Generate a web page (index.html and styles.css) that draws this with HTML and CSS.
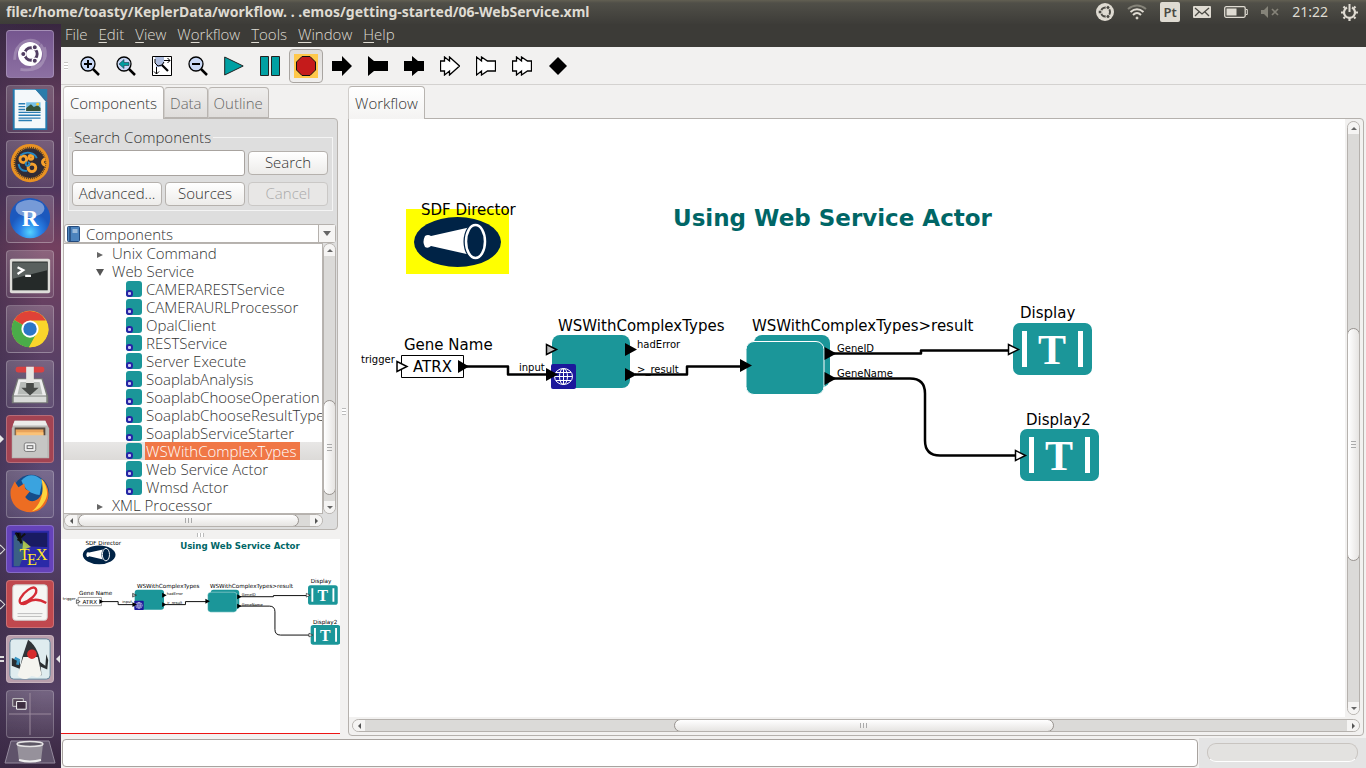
FILE: index.html
```html
<!DOCTYPE html>
<html lang="en">
<head>
<meta charset="utf-8">
<title>Kepler workflow</title>
<link rel="stylesheet" href="styles.css">
</head>
<body>
<header class="topbar">
  <h1 class="window-title">file:/home/toasty/KeplerData/workflow. . .emos/getting-started/06-WebService.xml</h1>
  <div class="indicators">
    <svg width="18" height="18" viewBox="0 0 18 18"><circle cx="9" cy="9" r="9" fill="#dfdbd2"/><circle cx="9.500" cy="9" r="4.500" fill="none" stroke="#4a4943" stroke-width="2"/><g fill="#4a4943" stroke="#dfdbd2"><circle cx="4" cy="9" r="2"/><circle cx="12" cy="4.500" r="2"/><circle cx="12" cy="13.500" r="2"/></g></svg>
    <svg width="20" height="16" viewBox="0 0 20 16" fill="none" stroke="#dfdbd2" stroke-width="2"><path d="M1 5Q10-2 19 5" stroke="#858379"/><path d="M3.500 8Q10 2.500 16.500 8M6 11Q10 7 14 11"/><circle cx="10" cy="14" r="1" fill="#dfdbd2" stroke-width="1"/></svg>
    <span class="layout-badge">Pt</span>
    <svg width="18" height="12" viewBox="0 0 18 12"><rect width="18" height="12" rx="1" fill="#dfdbd2"/><path d="M2 2L9 8L16 2M2 10L6 6M16 10L12 6" fill="none" stroke="#4a4943" stroke-width="1.300"/></svg>
    <svg width="24" height="12" viewBox="0 0 24 12"><rect x=".7" y=".7" width="20.500" height="10.600" rx="1.500" fill="none" stroke="#dfdbd2" stroke-width="1.300"/><rect x="2.500" y="2.500" width="10" height="7" fill="#dfdbd2"/><path d="M22 3.500h1.300v5H22" fill="none" stroke="#dfdbd2"/></svg>
    <svg width="18" height="12" viewBox="0 0 18 12"><path d="M0 4h3l4-4v12L3 8H0z" fill="#858379"/><path d="M11 3l6 6M17 3l-6 6" stroke="#858379" stroke-width="1.700"/></svg>
    <time class="clock">21:22</time>
    <svg width="17" height="17" viewBox="0 0 17 17" fill="none" stroke="#dfdbd2"><path d="M6 3.500A5.500 5.500 0 1 0 11 3.500" stroke-width="2.200"/><path d="M8.500 0v8" stroke-width="2"/><path d="M2.500 2.500l1.500 1.500M14.500 2.500l-1.500 1.500M0 8.500h3M14 8.500h3M2.500 14.500l1.500-1.500M14.500 14.500l-1.500-1.500M8.500 14v3" stroke-width="2.200"/></svg>
  </div>
</header>

<div class="desktop">
  <nav class="launcher" aria-label="Launcher">
    <button class="tile tile-dash" aria-label="Dash"><svg viewBox="0 0 48 48"><g fill="none" stroke="#fff"><path d="M8 30C8 10 27 5 34 14M14 40C40 44 43 25 35 14M39 17C43 30 35 38 25 37" stroke-width="3" opacity=".22"/></g><circle cx="24" cy="24" r="12.500" fill="#fff"/><circle cx="25" cy="24" r="6.500" fill="none" stroke="#503d61" stroke-width="3"/><g fill="#503d61" stroke="#fff" stroke-width="1.200"><circle cx="17" cy="24" r="2.700"/><circle cx="29" cy="17" r="2.700"/><circle cx="29" cy="31" r="2.700"/></g></svg></button>
    <button class="tile" aria-label="Writer"><svg viewBox="0 0 48 48"><path d="M6 3h24l12 14v29H6z" fill="#2379ae"/><path d="M8 4h22l10 12v28H8z" fill="#f4f8fa"/><path d="M29 3h13v13z" fill="#2a7cab"/><path d="M12 18.500h7M12 21.500h7M12 24.500h7M12 27.500h23M12 30.500h23M12 33.500h23M12 36h14" stroke="#2a7eb4" stroke-width="1.500"/><path d="M20 17h15v9H20z" fill="#76c0e6"/><path d="M20 26v-3l5-4 3 3 4-2 3 3v3z" fill="#34533b"/><circle cx="32" cy="19" r="1.500" fill="#fc3"/></svg></button>
    <button class="tile" aria-label="Gears"><svg viewBox="0 0 48 48"><circle cx="24" cy="23" r="20" fill="#e89122"/><circle cx="24" cy="23" r="15.500" fill="#302b35"/><circle cx="24" cy="23" r="16" fill="none" stroke="#4c3a28" stroke-width="2" stroke-dasharray="1 1"/><g fill="none" stroke="#f7a12c" stroke-width="3"><circle cx="17" cy="19" r="3.500"/><circle cx="26" cy="28" r="4"/><circle cx="25" cy="17" r="2"/><path d="M40 19a3 3 0 1 0 0 6"/></g><path d="M14 15C20 10 29 12 31 18M12 24C13 29 16 32 21 31M21 22a2 2 0 1 0 1 0" fill="none" stroke="#2586c2" stroke-width="2"/></svg></button>
    <button class="tile" aria-label="RStudio"><svg viewBox="0 0 48 48"><defs><radialGradient id="blue" cy="85%"><stop offset="0" stop-color="#55d3ff"/><stop offset=".5" stop-color="#2a84ea"/><stop offset="1" stop-color="#1c58bd"/></radialGradient></defs><circle cx="24" cy="23" r="21" fill="url(#blue)"/><ellipse cx="24" cy="13" rx="15" ry="9" fill="#fff" opacity=".4"/><text class="r-letter" x="24" y="31">R</text></svg></button>
    <button class="tile" aria-label="Terminal"><svg viewBox="0 0 48 48"><rect x="3" y="8" width="42" height="36" rx="2" fill="#deddd9"/><rect x="5.500" y="11" width="37" height="30" fill="#252a29"/><path d="M6 12h36v8L6 29z" fill="#59605e"/><path d="M11 17l6 3-6 4M19 26h6" fill="none" stroke="#fff" stroke-width="2.300"/></svg></button>
    <button class="tile" aria-label="Chrome"><svg viewBox="0 0 48 48"><circle cx="24" cy="24" r="19" fill="#f9d52b"/><path d="M24 24L7.500 14.500A19 19 0 0 1 40.500 15z" fill="#df4237"/><path d="M24 24L7.500 14.500A19 19 0 0 0 23 43z" fill="#4aac49"/><path d="M24 24l7 4-8 15-7-14z" fill="#4aac49"/><path d="M24 15h17A19 19 0 0 1 23 43l9-15z" fill="#f9d52b"/><circle cx="24" cy="24" r="9" fill="#fff"/><circle cx="24" cy="24" r="7" fill="#2b76c7"/></svg></button>
    <button class="tile" aria-label="Downloads"><svg viewBox="0 0 48 48"><path d="M11 18h26l6 19v7H5v-7z" fill="#777a77"/><path d="M12 19h24l5 17H7z" fill="#eee"/><path d="M14 22h20l3 13H11z" fill="#b7bbb8"/><path d="M7 37h34v6H7z" fill="#d9dbd9"/><rect x="9" y="6" width="30" height="6" rx="2.500" fill="#d84242"/><path d="M20 6h8v18h-8z" fill="#e6e6e3"/><path d="M20 23h8v5h5l-9 8-9-8h5z" fill="#474a48"/></svg></button>
    <button class="tile tile-files tile-open" aria-label="Files"><svg viewBox="0 0 48 48"><path d="M8 5h32l4 8v31H5V13z" fill="#b9b9b6"/><path d="M8 5h32l2 5H6z" fill="#ececea"/><path d="M8 12h32v10H8z" fill="#57483d"/><path d="M9 14h29v8H9z" fill="#e9a35b"/><path d="M10 17h28v6H10z" fill="#fac278"/><path d="M6 20h36v23H6z" fill="#c6c6c4"/><rect x="18" y="28" width="12" height="9" rx="2" fill="#eee" stroke="#777"/><rect x="21" y="31" width="6" height="3" fill="none" stroke="#666"/></svg></button>
    <button class="tile" aria-label="Firefox"><svg viewBox="0 0 48 48"><circle cx="25" cy="23" r="19" fill="#164c89"/><path d="M15 10Q25-1 37 10L34 25Q20 24 15 10z" fill="#3aa3df"/><path d="M36 8C50 21 43 42 25 43 9 43 2 31 4 19l4-8 4 6 6-4c1 5 0 6 6 8l-5 6c5 7 12 5 16-1 5-6 2-12 1-18z" fill="#ed6d22"/><path d="M36 8c6 7 8 17 3 24-3 6-8 9-13 10 10-8 13-20 10-34z" fill="#ffd33d"/></svg></button>
    <button class="tile tile-tex tile-running" aria-label="TeX editor"><svg viewBox="0 0 48 48"><rect x="5" y="5" width="39" height="38" fill="#2b2aa8"/><path d="M8 7h34v15L17 21z" fill="#191b62"/><path d="M12 8l9 14-8 20H7V10z" fill="#4c9662" opacity=".5"/><path d="M17 15l8 7-9 3z" fill="#c8e04a" opacity=".8"/><path d="M9 7l6 11-2-11M11 15l8-7" stroke="#111" stroke-width="2"/><text class="tex-letter" x="13" y="36">T</text><text class="tex-letter" x="21" y="41">E</text><text class="tex-letter" x="30" y="36">X</text></svg></button>
    <button class="tile tile-pdf tile-running" aria-label="Document viewer"><svg viewBox="0 0 48 48"><rect x="6" y="4" width="36" height="37" rx="3" fill="#f6f6f4" stroke="#cfcccb"/><path d="M14 24C24 21 33 13 30 8 27 4 17 12 14 18 11 24 17 26 22 22 28 18 34 19 41 23" fill="none" stroke="#d52c36" stroke-width="2.500"/><path d="M11 34h26M11 37h25" stroke="#bbb" stroke-width="1"/></svg></button>
    <button class="tile tile-java tile-active" aria-label="Java application"><svg viewBox="0 0 48 48"><rect x="3" y="3" width="42" height="42" rx="4" fill="#dfecef" stroke="#608198"/><path d="M13 26l-8-3v8l10 4zM33 26l7 5 1-12 2 6-1 10-9-4z" fill="#292e31"/><path d="M22 4c9 7 12 16 13 26l1 11H12l4-19z" fill="#303438"/><path d="M17 22h15l4 18c-4 6-8 1-11 2-5 5-11 3-14-1z" fill="#f4f4ef"/><circle cx="26" cy="19" r="5" fill="#d72b2b"/><path d="M8 23l4 2-1 5" fill="none" stroke="#3996c4" stroke-width="3"/></svg></button>
    <div class="launcher-end">
      <button class="tile tile-spaces" aria-label="Workspaces"><svg viewBox="0 0 48 48"><path d="M24 2v44M2 24h44" stroke="#9c8c9e"/><path d="M6 8h11v8H6z" fill="#554657" stroke="#ccc"/><path d="M10 11h10v8H10z" fill="#3d2d40" stroke="#fff"/></svg></button>
      <button class="trash" aria-label="Trash"><svg width="52" height="24" viewBox="0 0 52 24"><path d="M7 1h38l6 22H1z" fill="#5f536a" stroke="#948a9d"/><path d="M13 4l2 17q11 3 22 0l2-17z" fill="#96919b"/><ellipse cx="26" cy="4" rx="13" ry="2.500" fill="#5e5866" stroke="#e7e5e6" stroke-width="1.500"/><path d="M15 20q11 3 22 0" fill="none" stroke="#eee" stroke-width="2"/></svg></button>
    </div>
  </nav>

  <div class="app">
    <nav class="menubar" aria-label="Menu">
      <button>File</button><button><u>E</u>dit</button><button><u>V</u>iew</button><button>W<u>o</u>rkflow</button><button><u>T</u>ools</button><button><u>W</u>indow</button><button><u>H</u>elp</button>
    </nav>

    <div class="toolbar" role="toolbar" aria-label="Workflow tools">
      <span class="grip"></span>
      <button aria-label="Zoom in"><svg width="20" height="20" viewBox="0 0 20 20"><path d="M13 13l6 6" stroke="#000" stroke-width="2.500"/><circle cx="8" cy="8" r="7" fill="#c9d8f6" stroke="#000" stroke-width="1.300"/><path d="M8 4v8M4 8h8" stroke="#000" stroke-width="2"/></svg></button>
      <button aria-label="Zoom reset"><svg width="20" height="20" viewBox="0 0 20 20"><path d="M13 13l6 6" stroke="#000" stroke-width="2.500"/><circle cx="8" cy="8" r="7" fill="#c9d8f6" stroke="#000" stroke-width="1.300"/><path d="M3 8l5-4.500v3h5v3H8v3z" fill="#009c9e" stroke="#234" stroke-width=".6"/></svg></button>
      <button aria-label="Zoom fit"><svg width="20" height="20" viewBox="0 0 20 20"><path d="M.5.5h19v19H.5z" fill="#fff" stroke="#000"/><path d="M3 1h9v6l-3 4H4z" fill="#aebddf"/><path d="M10 9l6 6" stroke="#000" stroke-width="2.200"/><path d="M3 3v4l3 3 4-1 2-3M12 4.500h6M15.500 2l2.500 2.500L15.500 7M4.500 11v7M2 15.500L4.500 18 7 15.500" fill="none" stroke="#000"/></svg></button>
      <button aria-label="Zoom out"><svg width="20" height="20" viewBox="0 0 20 20"><path d="M13 13l6 6" stroke="#000" stroke-width="2.500"/><circle cx="8" cy="8" r="7" fill="#c9d8f6" stroke="#000" stroke-width="1.300"/><path d="M4 8h8" stroke="#000" stroke-width="2"/></svg></button>
      <button aria-label="Run"><svg width="20" height="20" viewBox="0 0 20 20"><path d="M.7 1l18.500 9L.7 19z" fill="#00a0a3" stroke="#222"/></svg></button>
      <button aria-label="Pause"><svg width="20" height="20" viewBox="0 0 20 20"><path d="M.5.5h8v19h-8zM11.500.5h8v19h-8z" fill="#00a0a3" stroke="#222"/></svg></button>
      <button class="is-focused" aria-label="Stop"><svg width="24" height="24" viewBox="0 0 24 24"><path d="M0 0h24v24H0z" fill="#ffc84b"/><path d="M8 2.500h8L21.500 8v8L16 21.500H8L2.500 16V8z" fill="#c51b1b" stroke="#111"/></svg></button>
      <button aria-label="Input port"><svg width="20" height="20" viewBox="0 0 20 20"><path d="M0 5h10V0l10 10-10 10v-5H0z"/></svg></button>
      <button aria-label="Output port"><svg width="20" height="20" viewBox="0 0 20 20"><path d="M0 0l6 5h14v10H6l-6 5z"/></svg></button>
      <button aria-label="Input and output port"><svg width="20" height="20" viewBox="0 0 20 20"><path d="M0 5h8V0l6 5h6v10h-6l-6 5v-5H0z"/></svg></button>
      <button aria-label="Input multiport"><svg width="20" height="20" viewBox="0 0 20 20"><path d="M.5 5h4V1l5 4V1l10 9-10 9v-4l-5 4v-4h-4z" fill="#fff" stroke="#000" stroke-width="1.300"/></svg></button>
      <button aria-label="Output multiport"><svg width="20" height="20" viewBox="0 0 20 20"><path d="M.5 1l5 4V1l6 4h8v10h-8l-6 4v-4l-5 4z" fill="#fff" stroke="#000" stroke-width="1.300"/></svg></button>
      <button aria-label="Input and output multiport"><svg width="20" height="20" viewBox="0 0 20 20"><path d="M.5 5h4V1l5 4V1l6 4h4v10h-4l-6 4v-4l-5 4v-4h-4z" fill="#fff" stroke="#000" stroke-width="1.300"/></svg></button>
      <button aria-label="Relation"><svg width="20" height="20" viewBox="0 0 20 20"><path d="M10 1l9 9-9 9-9-9z"/></svg></button>
    </div>

    <main class="workspace">
      <section class="side">
        <div class="tabs" role="tablist">
          <button class="tab is-selected" role="tab">Components</button><button class="tab" role="tab">Data</button><button class="tab" role="tab">Outline</button>
        </div>
        <div class="side-panel">
          <form class="search">
            <fieldset>
              <legend><label for="q">Search Components</label></legend>
              <div class="search-grid">
                <input class="search-input" id="q" type="text">
                <button type="button">Search</button>
                <button type="button">Advanced...</button>
                <button type="button">Sources</button>
                <button type="button" disabled>Cancel</button>
              </div>
            </fieldset>
          </form>
          <div class="combo">
            <svg width="14" height="16" viewBox="0 0 14 16"><rect x=".5" y=".5" width="12" height="15" rx="1" fill="#4c83bd" stroke="#234a7c"/><path d="M3 1v14" stroke="#234a7c" stroke-width="1.500"/><path d="M5.500 4h5M5.500 6h5" stroke="#e7f0f8"/></svg>
            <select aria-label="Ontology"><option>Components</option></select>
            <span class="combo-arrow"><i class="arrow arrow-down arrow-large"></i></span>
          </div>
          <div class="tree-area">
            <ul class="tree">
              <li class="branch"><i class="fold"></i>Unix Command</li>
              <li class="branch"><i class="fold fold-open"></i>Web Service
                <ul>
                  <li><i class="actor"></i><span>CAMERARESTService</span></li>
                  <li><i class="actor"></i><span>CAMERAURLProcessor</span></li>
                  <li><i class="actor"></i><span>OpalClient</span></li>
                  <li><i class="actor"></i><span>RESTService</span></li>
                  <li><i class="actor"></i><span>Server Execute</span></li>
                  <li><i class="actor"></i><span>SoaplabAnalysis</span></li>
                  <li><i class="actor"></i><span>SoaplabChooseOperation</span></li>
                  <li><i class="actor"></i><span>SoaplabChooseResultType</span></li>
                  <li><i class="actor"></i><span>SoaplabServiceStarter</span></li>
                  <li class="is-selected"><i class="actor"></i><span>WSWithComplexTypes</span></li>
                  <li><i class="actor"></i><span>Web Service Actor</span></li>
                  <li><i class="actor"></i><span>Wmsd Actor</span></li>
                </ul>
              </li>
              <li class="branch"><i class="fold"></i>XML Processor</li>
            </ul>
            <div class="scroll scroll-v tree-v"><button aria-label="Scroll up"><i class="arrow arrow-up"></i></button><div class="track"><span class="before"></span><span class="thumb"></span><span class="after"></span></div><button aria-label="Scroll down"><i class="arrow arrow-down"></i></button></div>
            <div class="scroll scroll-h tree-h"><button aria-label="Scroll left"><i class="arrow arrow-left"></i></button><div class="track"><span class="before"></span><span class="thumb"></span><span class="after"></span></div><button aria-label="Scroll right"><i class="arrow arrow-right"></i></button></div>
          </div>
        </div>
        <div class="split split-h"></div>
        <div class="overview">
          <svg viewBox="356 200 742 518" preserveAspectRatio="xMinYMin meet"><use href="#diagram"/></svg>
        </div>
      </section>

      <div class="split split-v"></div>

      <section class="editor">
        <div class="tabs" role="tablist"><button class="tab is-selected" role="tab">Workflow</button></div>
        <div class="editor-panel">
          <svg class="canvas" role="img" aria-label="Using Web Service Actor workflow">
            <g transform="translate(-349 -119)">
              <path d="M406 209h103v65H406z" fill="#ff0"/>
              <g id="diagram">
                <ellipse cx="457.500" cy="242" rx="43.500" ry="25" fill="#002346"/>
                <path d="M425 236q3-2 6 0l40-9v28l-40-9q-3 3-6 1-3-5 0-11z" fill="#fff"/>
                <ellipse cx="475" cy="241.500" rx="11.500" ry="18.500" fill="#002346"/>
                <ellipse cx="475.500" cy="241.500" rx="9.500" ry="16.500" fill="#002346" stroke="#fff" stroke-width="2.500"/>
                <text class="node-label" x="421" y="215">SDF Director</text>
                <text class="diagram-title" x="673" y="226">Using Web Service Actor</text>

                <g fill="none" stroke="#000" stroke-width="2.500" stroke-linejoin="round">
                  <path d="M465 366.500h43v8h43M635 374.500h52v-8h58M831 353.500h90v-3h88M831 378.500h79q15 0 15 15v47q0 15 15 15h76"/>
                </g>

                <text class="node-label" x="404" y="350">Gene Name</text>
                <path d="M401.500 355.500h62v22h-62z" fill="#fff" stroke="#000"/>
                <text class="node-label" x="413" y="372">ATRX</text>
                <path d="M397 361.500v10l10-5z" fill="#fff" stroke="#000" stroke-width="1.500"/>
                <path d="M458 360v13l11-6.500z"/>
                <text class="port-label" x="361" y="363">trigger</text>

                <text class="node-label" x="558" y="331">WSWithComplexTypes</text>
                <rect x="552" y="335" width="78" height="53" rx="8" fill="#1b9699"/>
                <path d="M546.500 344.500v10l10-5z" fill="#bbb" stroke="#000" stroke-width="1.500"/>
                <path d="M625 343v13l12-6.500zM625 368v13l12-6.500z"/>
                <rect x="551" y="364" width="25" height="25" rx="2" fill="#1c189b"/>
                <g fill="none" stroke="#fff"><ellipse cx="563.500" cy="376.500" rx="9" ry="8"/><ellipse cx="563.500" cy="376.500" rx="4" ry="8"/><path d="M563.500 368.500v16M554.500 376.500h18M556 372.500h15M556 380.500h15"/></g>
                <path d="M546 368v13l12-6.500z"/>
                <text class="port-label" x="519" y="371">input</text>
                <text class="port-label" x="637" y="348">hadError</text>
                <text class="port-label" x="637" y="373">&gt;_result</text>

                <text class="node-label" x="752" y="331">WSWithComplexTypes&gt;result</text>
                <rect x="754" y="335" width="76" height="52" rx="8" fill="#1b9699"/>
                <rect x="746" y="341.500" width="78" height="53" rx="8" fill="#1b9699" stroke="#fff"/>
                <path d="M740 359v13l12-6.500zM824.500 347v13l12-6.500zM824.500 372v13l12-6.500z"/>
                <text class="port-label" x="837" y="352">GeneID</text>
                <text class="port-label" x="837" y="377">GeneName</text>

                <text class="node-label" x="1020" y="318">Display</text>
                <g id="display">
                  <rect x="1013" y="323" width="79" height="52" rx="7" fill="#1b9699"/>
                  <path d="M1022 331h5v36h-5zM1078 331h5v36h-5z" fill="#fff"/>
                  <text class="display-letter" x="1052" y="364">T</text>
                  <path d="M1008.500 344.500v10l10-5z" fill="#fff" stroke="#000" stroke-width="1.500"/>
                </g>
                <text class="node-label" x="1026" y="425">Display2</text>
                <use href="#display" x="7" y="106"/>
              </g>
            </g>
          </svg>
          <div class="scroll scroll-v main-v"><button aria-label="Scroll up"><i class="arrow arrow-up"></i></button><div class="track"><span class="before"></span><span class="thumb"></span><span class="after"></span></div><button aria-label="Scroll down"><i class="arrow arrow-down"></i></button></div>
          <div class="scroll scroll-h main-h"><button aria-label="Scroll left"><i class="arrow arrow-left"></i></button><div class="track"><span class="before"></span><span class="thumb"></span><span class="after"></span></div><button aria-label="Scroll right"><i class="arrow arrow-right"></i></button></div>
        </div>
      </section>
    </main>

    <footer class="statusbar">
      <input class="status-text" type="text" aria-label="Status" readonly>
      <div class="status-side"><div class="progress" role="progressbar" aria-label="Progress"></div></div>
    </footer>
  </div>
</div>
</body>
</html>
```
FILE: styles.css
```css
*, *::before, *::after { box-sizing: border-box; }
body {
  margin: 0;
  height: 100vh;
  display: flex;
  flex-direction: column;
  overflow: hidden;
  background: #f2f1f0;
  color: #333;
  font: 300 15px/18px "Open Sans", "Noto Sans", sans-serif;
}
button, input, select { font: inherit; color: inherit; margin: 0; padding: 0; border: 0; background: none; }
svg { display: block; }
ul { margin: 0; padding: 0; list-style: none; }

/* Top panel */
.topbar {
  flex: none;
  height: 24px;
  padding: 0 8px 0 6px;
  display: flex;
  align-items: center;
  justify-content: space-between;
  background: linear-gradient(#625f52, #504f48 3px, #3d3c38);
  color: #dfdbd2;
}
.window-title { margin: 0; font: 700 14px/24px "Noto Sans", sans-serif; }
.indicators { display: flex; align-items: center; gap: 13px; }
.layout-badge {
  width: 20px;
  border-radius: 2px;
  background: #dfdbd2;
  color: #4a4943;
  text-align: center;
  font: 600 13px/20px "Noto Sans", sans-serif;
}
.clock { font: 400 14px/20px "Noto Sans", sans-serif; }

.desktop { flex: 1; min-height: 0; display: flex; }

/* Launcher */
.launcher {
  flex: none;
  width: 61px;
  padding: 6px 0 0 6px;
  display: flex;
  flex-direction: column;
  gap: 7px;
  background: linear-gradient(90deg, #3b2b4888, #3b2b4800 70%), linear-gradient(#382640, #5e3a59 10%, #50365e 22%, #73405f 30%, #554066 48%, #5b4b78 65%, #4a3555 78%, #544064 90%, #38263f);
}
.tile {
  position: relative;
  flex: none;
  width: 48px;
  height: 48px;
  border: 1px solid #ffffff38;
  border-radius: 4px;
  background: linear-gradient(#ffffff30, #ffffff12);
}
.tile svg { width: 46px; height: 46px; }
.tile-dash { background: linear-gradient(#75568f, #8c70a2); }
.tile-files { background: #a34352; }
.tile-tex { background: #6542b9; }
.tile-pdf { background: #bf484e; }
.tile-java { background: #b99eac; }
.tile-running::before {
  content: "";
  position: absolute;
  left: -10px;
  top: 20px;
  width: 7px;
  height: 7px;
  border: 1px solid #ddd;
  transform: rotate(45deg);
}
.tile-open::before {
  content: "";
  position: absolute;
  left: -7px;
  top: 19px;
  border: 4px solid transparent;
  border-right: 0;
  border-left-color: #e8e8e8;
}
.tile-active::after {
  content: "";
  position: absolute;
  right: -7px;
  top: 19px;
  border: 4px solid transparent;
  border-left: 0;
  border-right-color: #e8e8e8;
}
.tile-active::before {
  content: "";
  position: absolute;
  left: -7px;
  top: 20px;
  width: 4px;
  height: 6px;
  border: solid #ddd;
  border-width: 2px 0;
}
.launcher-end { display: flex; flex-direction: column; gap: 2px; }
.trash { width: 52px; height: 24px; margin-left: -2px; }
.r-letter { font: 700 24px "Liberation Serif", serif; text-anchor: middle; fill: #fff; }
.tex-letter { font: 400 17px "Liberation Serif", serif; fill: #ffe829; }

/* Application frame */
.app { flex: 1; min-width: 0; display: flex; flex-direction: column; }
.menubar {
  flex: none;
  height: 23px;
  padding: 0 4px 4px;
  display: flex;
  align-items: center;
  gap: 11px;
  background: #3c3b37;
  color: #dfdbd2;
}
.menubar u { text-underline-offset: 2px; }
.toolbar {
  flex: none;
  height: 38px;
  padding-left: 3px;
  display: flex;
  align-items: center;
  gap: 2px;
  border-bottom: 1px solid #d4d2d0;
}
.grip {
  width: 4px;
  height: 8px;
  margin-right: 3px;
  background: repeating-linear-gradient(#c8c6c3 0 1px, #fff 1px 3px);
}
.toolbar button {
  width: 34px;
  height: 34px;
  display: grid;
  place-items: center;
  border: 1px solid transparent;
  border-radius: 4px;
}
.toolbar .is-focused { border: 1px solid #a9a5a1; background: linear-gradient(#dedcda, #efeeed); }

.workspace { flex: 1; min-height: 0; display: flex; }
.side { flex: none; width: 279px; padding-top: 1px; display: flex; flex-direction: column; }
.tabs { flex: none; height: 32px; display: flex; align-items: flex-end; }
.side .tabs { padding-left: 2px; }
.tab {
  height: 31px;
  padding: 1px 5px 0;
  border: 1px solid #b8b4b0;
  border-left-color: #d0cdca;
  border-radius: 4px 4px 0 0;
  background: linear-gradient(#efeeed, #dfdddb);
  color: #666;
}
.tab.is-selected {
  position: relative;
  height: 33px;
  margin-bottom: -1px;
  padding: 0 6px 1px;
  border-bottom: 0;
  background: linear-gradient(#fff, #f4f3f2);
  color: #333;
}
.side-panel {
  flex: none;
  width: 275px;
  margin-left: 2px;
  padding: 9px 1px 0 2px;
  border: 1px solid #b8b4b0;
  border-radius: 0 4px 4px 4px;
  background: #dedede;
}

/* Search form */
.search { padding: 0 3px 0 2px; }
.search fieldset { margin: 0; padding: 4px 3px 4px; border: 1px solid #f4f4f4; min-width: 0; }
.search legend { padding: 0 2px; }
.search-grid { display: grid; grid-template-columns: 90px 80px 80px; gap: 6px 3px; align-items: center; }
.search-input {
  grid-column: span 2;
  height: 26px;
  padding: 0 4px;
  border: 1px solid #a8a39f;
  border-radius: 3px;
  background: #fff;
}
.search-grid button {
  height: 24px;
  padding-bottom: 2px;
  border: 1px solid #b5b1ad;
  border-radius: 4px;
  background: linear-gradient(#fff, #edecea);
}
.search-grid button:disabled { border-color: #cac8c6; background: #e8e7e6; color: #aaa; }
.combo {
  height: 19px;
  margin-top: 13px;
  margin-left: -2px;
  display: flex;
  align-items: center;
  border: 1px solid #b5b1ad;
  border-radius: 3px;
  background: #fff;
}
.combo svg { margin-left: 2px; }
.combo select { flex: 1; min-width: 0; padding-left: 5px; appearance: none; outline: 0; font: inherit; }
.combo-arrow {
  width: 17px;
  height: 17px;
  display: grid;
  place-items: center;
  border-left: 1px solid #b5b1ad;
  background: #f6f5f4;
}
.arrow { width: 0; height: 0; border: 3px solid transparent; }
.arrow-down { border-top-color: #666; border-bottom: 0; }
.arrow-up { border-bottom-color: #666; border-top: 0; }
.arrow-left { border-right-color: #555; border-left: 0; }
.arrow-right { border-left-color: #555; border-right: 0; }
.arrow-large { border-width: 5px 4px 0; }

/* Component tree */
.tree-area {
  height: 285px;
  margin: 0 0 1px -2px;
  display: grid;
  grid-template: 271px 14px / 1fr 13px;
}
.tree {
  overflow: hidden;
  min-width: 0;
  border: 1px solid #b8b4b0;
  border-left: 0;
  background: #fff;
  white-space: nowrap;
}
.branch { padding-left: 48px; line-height: 18px; }
.branch ul { margin-left: -48px; }
.fold {
  display: inline-block;
  width: 0;
  height: 0;
  margin: 0 9px 1px -15px;
  border: 3px solid transparent;
  border-left: 6px solid #666;
  border-right: 0;
}
.fold-open { margin: 0 8px 1px -16px; border: 4px solid transparent; border-top: 7px solid #555; border-bottom: 0; }
.tree ul li { height: 18px; padding-left: 62px; display: flex; align-items: center; }
.tree ul span { padding: 0 3px 0 1px; }
.actor {
  position: relative;
  flex: none;
  width: 16px;
  height: 16px;
  margin-right: 3px;
  border-radius: 3px;
  background: #1b9699;
}
.actor::after {
  content: "";
  position: absolute;
  left: 0;
  bottom: 0;
  width: 7px;
  height: 7px;
  border: 2px solid #2723a6;
  border-radius: 3px;
  background: #cbc9f0;
}
.tree .is-selected { background: linear-gradient(#e8e7e6, #dcdad8); }
.tree .is-selected span { background: #f07746; color: #fff; }

/* Scroll bars */
.scroll { display: flex; border: 1px solid #b5b1ad; border-radius: 7px; background: #dbdad8; overflow: hidden; }
.scroll button { flex: none; display: grid; place-items: center; background: #f5f4f3; }
.track { flex: 1; min-width: 0; min-height: 0; display: flex; }
.scroll-v, .scroll-v .track { flex-direction: column; }
.scroll-v { width: 13px; }
.scroll-h { height: 13px; }
.scroll-v button { height: 12px; }
.scroll-h button { width: 12px; }
.thumb {
  position: relative;
  border: 1px solid #98938f;
  border-radius: 7px;
  background: #f4f3f2;
}
.scroll-v .thumb { margin: 0 -1px; background: linear-gradient(90deg, #fff, #e6e4e2); }
.scroll-h .thumb { margin: -1px 0; background: linear-gradient(#fff, #e6e4e2); }
.thumb::after { content: ""; position: absolute; inset: 0; margin: auto; }
.scroll-v .thumb::after { width: 5px; height: 7px; background: repeating-linear-gradient(#aaa 0 1px, transparent 1px 3px); }
.scroll-h .thumb::after { width: 7px; height: 5px; background: repeating-linear-gradient(90deg, #aaa 0 1px, transparent 1px 3px); }
.tree-v .before { flex: 145; }
.tree-v .thumb { flex: 93; }
.tree-v .after { flex: 6; }
.tree-h .before { flex: 1; }
.tree-h .thumb { flex: 221; }
.tree-h .after { flex: 11; }
.main-v .before { flex: 195; }
.main-v .thumb { flex: 232; }
.main-v .after { flex: 142; }
.main-h .before { flex: 310; }
.main-h .thumb { flex: 379; }
.main-h .after { flex: 294; }

.split { flex: none; display: grid; place-items: center; }
.split::after { content: ""; }
.split-h { height: 9px; }
.split-h::after { width: 7px; height: 4px; background: repeating-linear-gradient(90deg, #bbb 0 1px, #fff 1px 3px); }
.split-v { width: 8px; }
.split-v::after { width: 4px; height: 7px; background: repeating-linear-gradient(#bbb 0 1px, #fff 1px 3px); }
.overview { flex: 1; min-height: 0; margin-bottom: 4px; border-bottom: 1px solid #ed1515; background: #fff; overflow: hidden; }
.overview svg { width: 100%; }

/* Workflow editor */
.editor { flex: 1; min-width: 0; padding: 1px 2px 2px 0; display: flex; flex-direction: column; }
.editor-panel {
  flex: 1;
  min-height: 0;
  display: grid;
  grid-template: minmax(0, 1fr) 13px / minmax(0, 1fr) 13px;
  gap: 2px;
  padding: 0 3px 3px 0;
  border: 1px solid #b5b1ad;
  border-radius: 0 4px 4px 4px;
}
.canvas { width: 100%; height: 100%; background: #fff; }
.main-v { margin: 2px 0; }
.main-h { grid-column: span 2; margin-left: 3px; }
.node-label { font: 400 15px "DejaVu Sans", sans-serif; fill: #000; }
.port-label { font: 400 10px "DejaVu Sans", sans-serif; fill: #000; }
.diagram-title { font: 700 23px "DejaVu Sans", sans-serif; fill: #006666; }
.display-letter { font: 700 42px "Liberation Serif", serif; text-anchor: middle; fill: #fff; }

/* Status bar */
.statusbar { flex: none; height: 30px; display: flex; background: #f2f1f0; }
.status-text {
  flex: 1;
  min-width: 0;
  height: 28px;
  margin: 1px;
  border: 1px solid #a8a39f;
  border-radius: 4px;
  background: #fff;
}
.status-side { flex: none; width: 167px; padding: 5px 8px; background: #e4e4e4; }
.progress { height: 19px; border: 1px solid #c8c4c0; border-bottom-color: #fff; border-radius: 9px; background: #e3e2e0; }
```
